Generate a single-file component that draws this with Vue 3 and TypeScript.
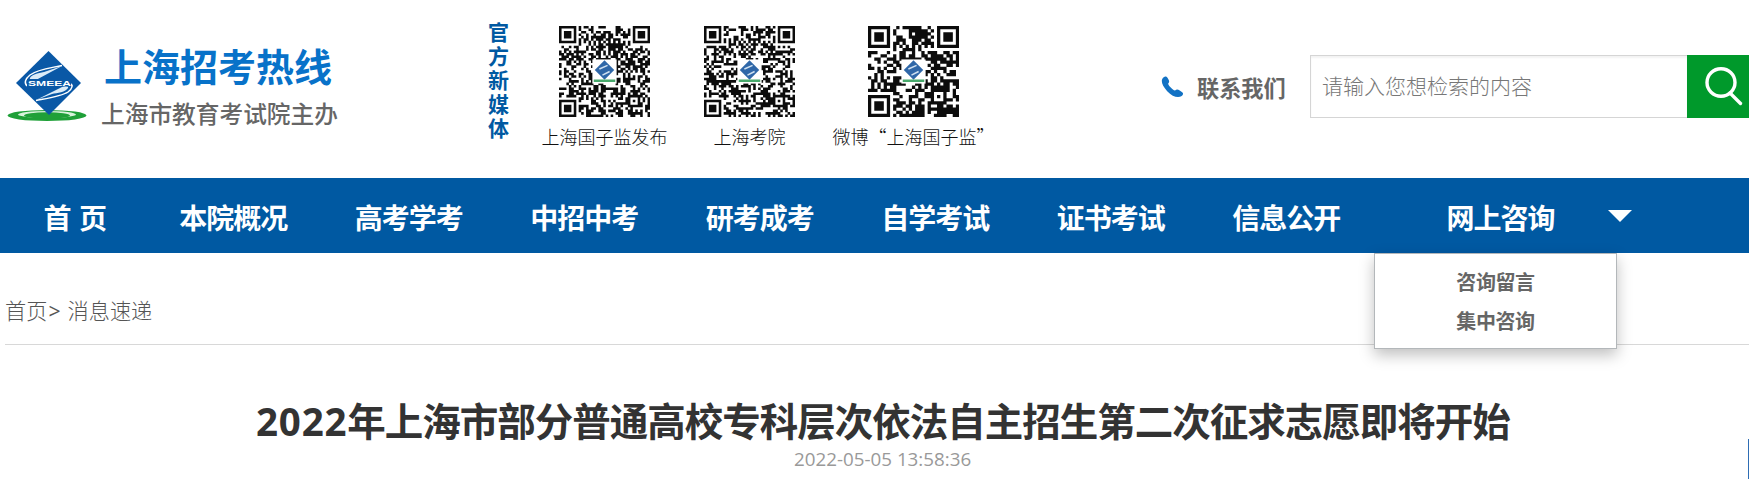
<template>
  <div class="page">
    <header class="header">
      <a class="logo" href="#">
        <svg class="logo__mark" viewBox="0 0 82 74" aria-hidden="true">
          <ellipse cx="41" cy="65.5" rx="39.5" ry="5.5" fill="#1fa038" />
          <ellipse cx="41" cy="64.5" rx="29" ry="3.4" fill="#d9f2dc" />
          <ellipse cx="41" cy="65.5" rx="23" ry="3.2" fill="#1fa038" />
          <path d="M42.500 1L75 33L43 65L10 33Z" fill="#0a58a6" />
          <path
            d="M56 15.500C45 18 32 19 24 25C19 29 18 33 21 36"
            fill="none"
            stroke="#fff"
            stroke-width="1.500"
          />
          <path d="M56 16L30 30C26 32 23 30 24 28C25 25 32 23 38 22Z" fill="#dcecf8" />
          <path
            d="M30 50.500C43 48 56 46 62 42C67 38 67 35 64 33"
            fill="none"
            stroke="#fff"
            stroke-width="1.500"
          />
          <path d="M30 50L56 37C60 35 63 36 62 38C60 42 51 43 46 44Z" fill="#dcecf8" />
          <rect x="21" y="29" width="44" height="7.500" fill="#0a58a6" />
          <text x="22" y="35.500" textLength="43" lengthAdjust="spacingAndGlyphs" class="logo__code">
            SMEEA
          </text>
        </svg>
        <span class="logo__text">
          <strong class="logo__title">上海招考热线</strong>
          <span class="logo__sub">上海市教育考试院主办</span>
        </span>
      </a>

      <div class="media">
        <div class="media__label">官方新媒体</div>
        <figure
          v-for="code in codes"
          :key="code.label"
          class="media__item"
          :class="`media__item--${code.name}`"
        >
          <svg class="media__qr" :viewBox="`0 0 ${code.size} ${code.size}`" aria-hidden="true">
            <path :d="code.path" fill="#0c0c0c" />
            <svg
              :x="code.size * 0.365"
              :y="code.size * 0.365"
              :width="code.size * 0.27"
              :height="code.size * 0.27"
              viewBox="0 0 24 24"
            >
              <rect width="24" height="24" fill="#fff" />
              <path d="M12 1L21.500 10.500L12 20L2.500 10.500Z" fill="#2f67a8" />
              <path d="M15 6L7 9.500M17 12L10 15.500" stroke="#cfe0f0" stroke-width="1.500" />
              <path d="M1.500 21H22.500" stroke="#48a96c" stroke-width="2.500" />
            </svg>
          </svg>
          <figcaption class="media__caption">{{ code.label }}</figcaption>
        </figure>
      </div>

      <a class="contact" href="#">
        <svg class="contact__icon" viewBox="0 0 22 22" aria-hidden="true">
          <path
            d="M2.200 1.200C3.800-.2 5.300.4 6.300 2.200C7.600 4.200 8.300 5.800 6.800 7.300C6.500 8.300 7.300 9.600 9 11.300C10.800 13.300 12.400 14.500 13.600 14.400C15 13 16.600 13.400 18.200 14.400L20.700 16.200C22.200 17.300 21.600 18.700 20.200 19.900C17 22.300 11 21 5.700 15.200C.2 9.200-1.300 4 2.200 1.200Z"
            fill="#1272c4"
          />
        </svg>
        <span>联系我们</span>
      </a>

      <form class="search" @submit.prevent>
        <input v-model="keyword" class="search__input" type="text" placeholder="请输入您想检索的内容" />
        <button class="search__button" type="submit" aria-label="搜索">
          <svg viewBox="0 0 62 63" aria-hidden="true">
            <ellipse cx="34" cy="27.500" rx="14" ry="13.700" />
            <path d="M43 38L53.500 48.500" stroke-linecap="round" />
          </svg>
        </button>
      </form>
    </header>

    <nav class="nav">
      <a v-for="item in navItems" :key="item" class="nav__item" href="#">{{ item }}</a>
      <div class="nav__item nav__item--open">
        <span>网上咨询</span>
        <span class="nav__arrow"></span>
        <div class="dropdown">
          <a v-for="child in consultItems" :key="child" class="dropdown__item" href="#">
            {{ child }}
          </a>
        </div>
      </div>
    </nav>

    <main class="content">
      <div class="breadcrumb">
        <span>首页</span><span class="breadcrumb__sep">&gt;</span><span>消息速递</span>
      </div>
      <h1 class="title">
        <span class="title__year">2022</span>年上海市部分普通高校专科层次依法自主招生第二次征求志愿即将开始
      </h1>
      <time class="date">2022-05-05 13:58:36</time>
    </main>
    <div class="side-edge"></div>
  </div>
</template>

<script setup lang="ts">
import { ref } from 'vue';

const keyword = ref('');

const navItems = [
  '首 页',
  '本院概况',
  '高考学考',
  '中招中考',
  '研考成考',
  '自学考试',
  '证书考试',
  '信息公开',
];

const consultItems = ['咨询留言', '集中咨询'];

// Finder and alignment squares are concentric rings around a centre module.
function ringValue(x: number, y: number, cx: number, cy: number, radius: number): boolean | null {
  const d = Math.max(Math.abs(x - cx), Math.abs(y - cy));
  if (d > radius) return null;
  if (radius === 4) return d !== 2 && d !== 4;
  return d !== 1;
}

function buildQr(size: number, seed: number): string {
  let state = seed;
  let path = '';
  for (let y = 0; y < size; y++) {
    for (let x = 0; x < size; x++) {
      state = (Math.imul(state, 1664525) + 1013904223) >>> 0;
      const fixed =
        ringValue(x, y, 3, 3, 4) ??
        ringValue(x, y, size - 4, 3, 4) ??
        ringValue(x, y, 3, size - 4, 4) ??
        ringValue(x, y, size - 7, size - 7, 2);
      const timing = x === 6 || y === 6 ? (x + y) % 2 === 0 : null;
      if (fixed ?? timing ?? state / 4294967296 < 0.53) {
        path += `M${x} ${y}h1.04v1.04h-1.04z`;
      }
    }
  }
  return path;
}

const codes = [
  { name: 'wechat', label: '上海国子监发布', size: 37, path: buildQr(37, 2022) },
  { name: 'academy', label: '上海考院', size: 37, path: buildQr(37, 815) },
  { name: 'weibo', label: '微博“上海国子监”', size: 29, path: buildQr(29, 4117) },
];
</script>

<style>
body {
  margin: 0;
  background: #fff;
}
</style>

<style scoped>
.page {
  position: relative;
  height: 479px;
  overflow: hidden;
  font-family: 'Open Sans', 'Noto Sans CJK SC', sans-serif;
  color: #333;
}

a {
  color: inherit;
  text-decoration: none;
}

.header {
  display: flex;
  align-items: flex-start;
  height: 178px;
}

.logo {
  display: flex;
  flex: none;
  width: 481px;
  padding: 50px 0 0 6px;
  box-sizing: border-box;
}

.logo__mark {
  width: 82px;
  height: 74px;
}

.logo__code {
  font: bold 8px 'Liberation Sans', sans-serif;
  fill: #fff;
}

.logo__text {
  display: flex;
  flex-direction: column;
  margin: -7px 0 0 16px;
}

.logo__title {
  font-size: 38px;
  line-height: 46px;
  color: #0872c9;
  font-weight: 700;
  white-space: nowrap;
}

.logo__sub {
  margin: 11px 0 0 -3px;
  font-size: 23.7px;
  line-height: 28px;
  font-weight: 500;
  color: #666;
  white-space: nowrap;
}

.media {
  display: flex;
  flex: none;
  width: 679px;
}

.media__label {
  width: 21px;
  margin: 20px 0 0 7px;
  font-size: 21px;
  line-height: 24px;
  font-weight: 700;
  color: #0059a2;
  word-break: break-all;
}

.media__item {
  display: flex;
  flex-direction: column;
  align-items: center;
  margin: 26px 0 0;
  white-space: nowrap;
}

.media__item--wechat {
  width: 145px;
  margin-left: 23px;
}

.media__item--academy {
  width: 145px;
}

.media__item--weibo {
  width: 183px;
}

.media__qr {
  width: 91px;
  height: 91px;
}

.media__caption {
  margin-top: 7px;
  font-family: 'Noto Sans CJK SC', sans-serif;
  font-size: 18px;
  line-height: 24px;
  font-weight: 300;
  color: #111;
}

.contact {
  display: flex;
  flex: none;
  align-items: center;
  width: 150px;
  margin-top: 74px;
  font-size: 22.2px;
  line-height: 30px;
  font-weight: 700;
  color: #666;
}

.contact__icon {
  width: 23px;
  height: 22px;
  margin: -5px 13px 0 1px;
}

.search {
  display: flex;
  flex: 1;
  height: 63px;
  margin-top: 55px;
}

.search__input {
  width: 377px;
  padding: 0 11px 2px;
  box-sizing: border-box;
  border: 1px solid #d5d5d5;
  border-right: 0;
  outline: 0;
  font-family: inherit;
  font-size: 21px;
  font-weight: 300;
  color: #333;
  box-shadow: inset 0 2px 2px rgba(0, 0, 0, 0.05);
}

.search__input::placeholder {
  color: #777;
}

.search__button {
  width: 62px;
  padding: 0;
  border: 0;
  background: #00992b;
}

.search__button svg {
  display: block;
  width: 62px;
  height: 63px;
  fill: none;
  stroke: #fff;
  stroke-width: 3.4;
}

.nav {
  display: flex;
  height: 75px;
  background: #0059a2;
  color: #fff;
  font-size: 28px;
  line-height: 80px;
  font-weight: 700;
  letter-spacing: -1px;
}

.nav__item {
  flex: none;
  width: 175.5px;
  text-align: center;
}

.nav__item:first-child {
  width: 145.5px;
  padding-left: 4px;
  box-sizing: border-box;
  word-spacing: 2px;
}

.nav__item--open {
  position: relative;
  width: 253px;
}

.nav__arrow {
  position: absolute;
  top: 32px;
  right: -5px;
  border: 12px solid transparent;
  border-top-color: #fff;
  border-bottom: 0;
}

.dropdown {
  position: absolute;
  top: 75px;
  left: 0;
  z-index: 2;
  width: 243px;
  height: 96px;
  padding-top: 9px;
  box-sizing: border-box;
  border: 1px solid #b3b7ba;
  background: #fff;
  box-shadow: 0 6px 14px rgba(0, 0, 0, 0.25);
  font-size: 20px;
  line-height: 39px;
  letter-spacing: -0.4px;
  color: #666;
}

.dropdown__item {
  display: block;
}

.content {
  display: flex;
  flex-direction: column;
  padding-left: 5px;
}

.breadcrumb {
  height: 91px;
  border-bottom: 1px solid #d8d8d8;
  font-size: 21.2px;
  line-height: 115px;
  font-weight: 300;
  color: #555;
}

.breadcrumb__sep {
  margin: 0 7px 0 1px;
  font-weight: 400;
}

.title {
  margin: 49px 0 0 251px;
  font-size: 38.5px;
  line-height: 54px;
  font-weight: 700;
  letter-spacing: -1px;
  color: #333;
  white-space: nowrap;
}

.title__year {
  letter-spacing: 0.8px;
}

.date {
  margin-left: 789px;
  font-size: 18.8px;
  line-height: 23px;
  color: #999;
}

.side-edge {
  position: absolute;
  right: 0;
  bottom: 0;
  width: 1px;
  height: 40px;
  background: #2e6db4;
}
</style>
